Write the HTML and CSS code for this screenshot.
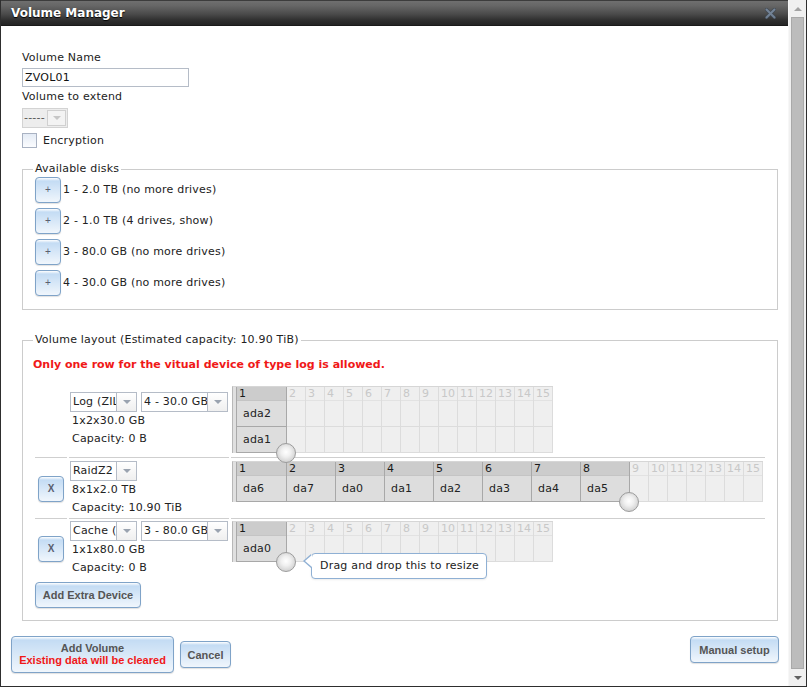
FILE: index.html
```html
<!DOCTYPE html>
<html>
<head>
<meta charset="utf-8">
<title>Volume Manager</title>
<link rel="stylesheet" href="styles.css">
</head>
<body>
<div class="frame">
  <div class="dialog">
    <div class="titlebar">
      <span class="title">Volume Manager</span>
      <svg class="close" width="11" height="11" viewBox="0 0 11 11">
        <path d="M1.5 1.5 L9.5 9.5 M9.5 1.5 L1.5 9.5" stroke="#3e4854" stroke-width="3.4" stroke-linecap="round"/>
        <path d="M1.5 1.5 L9.5 9.5 M9.5 1.5 L1.5 9.5" stroke="#7d90a8" stroke-width="2" stroke-linecap="round"/>
      </svg>
    </div>
    <div class="content">
      <div class="label">Volume Name</div>
      <div class="textbox">ZVOL01</div>
      <div class="label label-gap">Volume to extend</div>
      <div class="select disabled w46"><span class="sel-text">-----</span><span class="sel-arrow"><i class="tri"></i></span></div>
      <div class="check"><span class="box"></span><span>Encryption</span></div>

      <fieldset class="fs disks">
        <legend>Available disks</legend>
        <div class="disk"><span class="btn sq">+</span><span>1 - 2.0 TB (no more drives)</span></div>
        <div class="disk"><span class="btn sq">+</span><span>2 - 1.0 TB (4 drives, show)</span></div>
        <div class="disk"><span class="btn sq">+</span><span>3 - 80.0 GB (no more drives)</span></div>
        <div class="disk"><span class="btn sq">+</span><span>4 - 30.0 GB (no more drives)</span></div>
      </fieldset>

      <fieldset class="fs layout">
        <legend>Volume layout (Estimated capacity: 10.90 TiB)</legend>
        <div class="error">Only one row for the vitual device of type log is allowed.</div>
        <div class="vrows">
          <div class="vrow r1">
            <div class="ca"></div>
            <div class="cb">
              <div class="sels">
                <div class="select w67"><span class="sel-text">Log (ZIL)</span><span class="sel-arrow"><i class="tri"></i></span></div>
                <div class="select w87"><span class="sel-text">4 - 30.0 GB</span><span class="sel-arrow"><i class="tri"></i></span></div>
              </div>
              <div class="info">1x2x30.0 GB</div>
              <div class="info">Capacity: 0 B</div>
            </div>
            <div class="cc">
              <div class="vgrid">
                <div class="strip"></div>
                <div class="col sel first"><div class="hd">1</div><div class="cell">ada2</div><div class="cell">ada1</div><span class="knob"></span></div>
                <div class="col"><div class="hd">2</div><div class="cell"></div><div class="cell"></div></div>
                <div class="col"><div class="hd">3</div><div class="cell"></div><div class="cell"></div></div>
                <div class="col"><div class="hd">4</div><div class="cell"></div><div class="cell"></div></div>
                <div class="col"><div class="hd">5</div><div class="cell"></div><div class="cell"></div></div>
                <div class="col"><div class="hd">6</div><div class="cell"></div><div class="cell"></div></div>
                <div class="col"><div class="hd">7</div><div class="cell"></div><div class="cell"></div></div>
                <div class="col"><div class="hd">8</div><div class="cell"></div><div class="cell"></div></div>
                <div class="col"><div class="hd">9</div><div class="cell"></div><div class="cell"></div></div>
                <div class="col"><div class="hd">10</div><div class="cell"></div><div class="cell"></div></div>
                <div class="col"><div class="hd">11</div><div class="cell"></div><div class="cell"></div></div>
                <div class="col"><div class="hd">12</div><div class="cell"></div><div class="cell"></div></div>
                <div class="col"><div class="hd">13</div><div class="cell"></div><div class="cell"></div></div>
                <div class="col"><div class="hd">14</div><div class="cell"></div><div class="cell"></div></div>
                <div class="col"><div class="hd">15</div><div class="cell"></div><div class="cell"></div></div>
              </div>
            </div>
          </div>

          <div class="vrow r2">
            <div class="ca"><span class="btn xbtn">X</span></div>
            <div class="cb">
              <div class="sels">
                <div class="select w67"><span class="sel-text">RaidZ2</span><span class="sel-arrow"><i class="tri"></i></span></div>
              </div>
              <div class="info">8x1x2.0 TB</div>
              <div class="info">Capacity: 10.90 TiB</div>
            </div>
            <div class="cc">
              <div class="vgrid">
                <div class="strip"></div>
                <div class="col sel first"><div class="hd">1</div><div class="cell">da6</div></div>
                <div class="col sel"><div class="hd">2</div><div class="cell">da7</div></div>
                <div class="col sel"><div class="hd">3</div><div class="cell">da0</div></div>
                <div class="col sel"><div class="hd">4</div><div class="cell">da1</div></div>
                <div class="col sel"><div class="hd">5</div><div class="cell">da2</div></div>
                <div class="col sel"><div class="hd">6</div><div class="cell">da3</div></div>
                <div class="col sel"><div class="hd">7</div><div class="cell">da4</div></div>
                <div class="col sel"><div class="hd">8</div><div class="cell">da5</div><span class="knob"></span></div>
                <div class="col"><div class="hd">9</div><div class="cell"></div></div>
                <div class="col"><div class="hd">10</div><div class="cell"></div></div>
                <div class="col"><div class="hd">11</div><div class="cell"></div></div>
                <div class="col"><div class="hd">12</div><div class="cell"></div></div>
                <div class="col"><div class="hd">13</div><div class="cell"></div></div>
                <div class="col"><div class="hd">14</div><div class="cell"></div></div>
                <div class="col"><div class="hd">15</div><div class="cell"></div></div>
              </div>
            </div>
          </div>

          <div class="vrow r3">
            <div class="ca"><span class="btn xbtn">X</span></div>
            <div class="cb">
              <div class="sels">
                <div class="select w67"><span class="sel-text">Cache (L2ARC)</span><span class="sel-arrow"><i class="tri"></i></span></div>
                <div class="select w87"><span class="sel-text">3 - 80.0 GB</span><span class="sel-arrow"><i class="tri"></i></span></div>
              </div>
              <div class="info">1x1x80.0 GB</div>
              <div class="info">Capacity: 0 B</div>
            </div>
            <div class="cc">
              <div class="vgrid">
                <div class="strip"></div>
                <div class="col sel first"><div class="hd">1</div><div class="cell">ada0</div><span class="knob"></span></div>
                <div class="col"><div class="hd">2</div><div class="cell"></div></div>
                <div class="col"><div class="hd">3</div><div class="cell"></div></div>
                <div class="col"><div class="hd">4</div><div class="cell"></div></div>
                <div class="col"><div class="hd">5</div><div class="cell"></div></div>
                <div class="col"><div class="hd">6</div><div class="cell"></div></div>
                <div class="col"><div class="hd">7</div><div class="cell"></div></div>
                <div class="col"><div class="hd">8</div><div class="cell"></div></div>
                <div class="col"><div class="hd">9</div><div class="cell"></div></div>
                <div class="col"><div class="hd">10</div><div class="cell"></div></div>
                <div class="col"><div class="hd">11</div><div class="cell"></div></div>
                <div class="col"><div class="hd">12</div><div class="cell"></div></div>
                <div class="col"><div class="hd">13</div><div class="cell"></div></div>
                <div class="col"><div class="hd">14</div><div class="cell"></div></div>
                <div class="col"><div class="hd">15</div><div class="cell"></div></div>
              </div>
              <div class="tooltip">Drag and drop this to resize</div>
            </div>
          </div>
        </div>
        <div class="btn extra">Add Extra Device</div>
      </fieldset>
    </div>
    <div class="footer">
      <div class="footer-left">
        <div class="btn addvol"><span>Add Volume</span><span class="warn">Existing data will be cleared</span></div>
        <div class="btn cancel">Cancel</div>
      </div>
      <div class="btn manual">Manual setup</div>
    </div>
  </div>
  <div class="scrollbar">
    <div class="sb-arrow up"></div>
    <div class="sb-thumb"></div>
    <div class="sb-arrow down"></div>
  </div>
</div>
</body>
</html>
```

FILE: styles.css
```css
html, body {
  margin: 0;
  padding: 0;
  background: #ffffff;
}

body {
  font-family: "DejaVu Sans", Verdana, sans-serif;
  font-size: 11px;
  line-height: 14px;
  letter-spacing: 0.2px;
  color: #222222;
}

.frame {
  width: 807px;
  height: 687px;
  box-sizing: border-box;
  border-left: 1px solid #2e2e2e;
  border-right: 1px solid #2e2e2e;
  border-bottom: 1px solid #2e2e2e;
  display: flex;
  overflow: hidden;
}

.dialog {
  width: 787px;
  display: flex;
  flex-direction: column;
  background: #ffffff;
}

/* Title bar */
.titlebar {
  height: 26px;
  box-sizing: border-box;
  border-top: 1px solid #3c3c3c;
  border-bottom: 1px solid #1a1a1a;
  background: linear-gradient(#6f6f6f 0%, #666666 20%, #4a4a4a 55%, #2f2f2f 80%, #242424 100%);
  display: flex;
  align-items: center;
  padding-left: 10px;
  padding-right: 12px;
}

.title {
  font-weight: bold;
  font-size: 12px;
  letter-spacing: 0;
  color: #ffffff;
  text-shadow: 0 1px 1px #000000;
  line-height: 24px;
}

.close {
  margin-left: auto;
  opacity: 0.8;
}

/* Form area */
.content {
  padding: 25px 10px 0 21px;
}

.label {
  height: 14px;
}

.label-gap {
  margin-top: 3px;
}

.textbox {
  margin-top: 3px;
  width: 167px;
  height: 19px;
  box-sizing: border-box;
  border: 1px solid #b5bcc7;
  padding-left: 2px;
  line-height: 17px;
  color: #111111;
}

.select {
  display: flex;
  height: 20px;
  box-sizing: border-box;
  border: 1px solid #b5bcc7;
  background: #ffffff;
}

.select.w46 { width: 46px; }
.select.w67 { width: 67px; }
.select.w87 { width: 87px; }

.sel-text {
  flex: 1;
  min-width: 0;
  overflow: hidden;
  white-space: nowrap;
  text-overflow: clip;
  padding-left: 2px;
  line-height: 18px;
  color: #222222;
}

.sel-arrow {
  width: 19px;
  flex: none;
  border-left: 1px solid #b5bcc7;
  background: linear-gradient(#ffffff, #efefef);
  display: flex;
  align-items: center;
  justify-content: center;
}

.tri {
  width: 0;
  height: 0;
  border-left: 4px solid transparent;
  border-right: 4px solid transparent;
  border-top: 4px solid #9aa3b0;
}

.select.disabled {
  margin-top: 4px;
  border-color: #d3d3d3;
  background: #ededed;
}

.select.disabled .sel-text {
  color: #555555;
  padding-left: 1px;
}

.select.disabled .sel-arrow {
  margin: 1px;
  border: 1px solid #d0d0d0;
  width: 17px;
  background: #f3f3f3;
}

.select.disabled .tri {
  border-top-color: #c6c6c6;
}

.check {
  margin-top: 5px;
  display: flex;
  align-items: center;
  gap: 6px;
  height: 15px;
}

.box {
  width: 15px;
  height: 15px;
  box-sizing: border-box;
  border: 1px solid #a9b2c2;
  background: linear-gradient(#e4ebf5, #fbfcfe);
}

/* Fieldsets */
.fs {
  margin: 0;
  padding: 0 12px 13px 12px;
  border: 1px solid #cccccc;
  min-width: 0;
}

.fs legend {
  padding: 0 2px;
  margin-left: -2px;
  line-height: 14px;
}

.disks {
  margin-top: 14px;
}

.disk {
  display: flex;
  align-items: center;
  gap: 2px;
  height: 26px;
  margin-top: 5px;
}

.disk:first-of-type {
  margin-top: 1px;
}

.layout {
  margin-top: 23px;
  padding-bottom: 12px;
}

.error {
  margin-top: 11px;
  margin-left: -2px;
  font-weight: bold;
  letter-spacing: 0;
  color: #f01818;
}

/* Buttons */
.btn {
  display: flex;
  align-items: center;
  justify-content: center;
  box-sizing: border-box;
  border: 1px solid #7fa3c8;
  border-radius: 4px;
  background-color: #c4dcf4;
  background-image: linear-gradient(#ffffff 0px, rgba(255, 255, 255, 0) 3px, rgba(255, 255, 255, 0.75) 100%);
  box-shadow: 0 1px 1px rgba(0, 0, 0, 0.12);
  font-family: "Liberation Sans", Arial, sans-serif;
  font-weight: bold;
  font-size: 11px;
  letter-spacing: 0;
  color: #555555;
}

.btn.sq {
  width: 26px;
  height: 26px;
  flex: none;
  font-weight: normal;
  font-size: 10px;
  color: #5a6070;
}

.btn.xbtn {
  width: 26px;
  height: 26px;
  font-size: 10px;
  color: #5a6070;
}

.btn.extra {
  margin-top: 3px;
  width: 106px;
  height: 26px;
}

/* Volume layout rows */
.vrows {
  margin-top: 12px;
  display: flex;
  flex-direction: column;
}

.vrow {
  display: flex;
  gap: 2px;
}

.vrow + .vrow {
  margin-top: 1px;
}

.ca, .cb, .cc {
  border-bottom: 1px solid #cfcfcf;
  padding-top: 2px;
  padding-bottom: 1px;
}

.r3 .ca, .r3 .cb, .r3 .cc {
  border-bottom-color: transparent;
  padding-top: 1px;
}

.ca {
  width: 32px;
  flex: none;
  display: flex;
  align-items: center;
  justify-content: center;
}

.cb {
  width: 158px;
  flex: none;
  padding-left: 2px;
  display: flex;
  flex-direction: column;
  justify-content: center;
}

.r1 .cb {
  padding-bottom: 4px;
}

.sels {
  display: flex;
  gap: 4px;
  margin-left: -1px;
}

.info {
  line-height: 18px;
  height: 18px;
  padding-left: 1px;
}

.cc {
  flex: 1;
  min-width: 0;
  position: relative;
}

.r1 .cc {
  padding-bottom: 4px;
}

.vgrid {
  display: flex;
  align-self: flex-start;
  width: max-content;
  border-top: 1px solid #d6d6d6;
  border-left: 1px solid #b8b8b8;
  margin-left: 1px;
}

.strip {
  width: 3px;
  background: #e0e0e0;
  border-right: 1px solid #a9a9a9;
}

.col {
  width: 18px;
  display: flex;
  flex-direction: column;
  border-right: 1px solid #dcdcdc;
  background: #efefef;
  position: relative;
}

.col.sel {
  width: 48px;
  background: #dddddd;
  border-right-color: #a8a8a8;
}

.col.sel.first {
  width: 49px;
}

.hd {
  height: 13px;
  line-height: 13px;
  border-bottom: 1px solid #e2e2e2;
  padding-left: 2px;
  color: #c8c8c8;
  letter-spacing: 0;
  white-space: nowrap;
  overflow: hidden;
}

.col.sel .hd {
  background: #cccccc;
  color: #1a1a1a;
  border-bottom-color: #c4c4c4;
}

.cell {
  height: 25px;
  line-height: 25px;
  border-bottom: 1px solid #dcdcdc;
  padding-left: 6px;
  white-space: nowrap;
}

.col.sel .cell {
  border-bottom-color: #a8a8a8;
}

.knob {
  position: absolute;
  right: -10px;
  bottom: -10px;
  width: 18px;
  height: 18px;
  border: 1px solid #9c9c9c;
  border-radius: 50%;
  background: radial-gradient(circle at 50% 45%, #ffffff 0%, #f0f0f0 35%, #d2d2d2 75%, #bdbdbd 100%);
  z-index: 2;
}

.tooltip {
  position: absolute;
  left: 80px;
  top: 33px;
  width: 176px;
  height: 26px;
  box-sizing: border-box;
  border: 1px solid #8fb0d4;
  border-radius: 4px;
  background: #ffffff;
  padding-left: 8px;
  line-height: 24px;
  white-space: nowrap;
  box-shadow: 0 1px 2px rgba(0, 0, 0, 0.08);
  z-index: 3;
}

.tooltip::before {
  content: "";
  position: absolute;
  left: -9px;
  top: 0px;
  border-top: 7px solid transparent;
  border-bottom: 7px solid transparent;
  border-right: 8px solid #8fb0d4;
}

.tooltip::after {
  content: "";
  position: absolute;
  left: -7px;
  top: 1px;
  border-top: 6px solid transparent;
  border-bottom: 6px solid transparent;
  border-right: 7px solid #ffffff;
}

/* Footer */
.footer {
  display: flex;
  justify-content: space-between;
  align-items: flex-start;
  padding: 15px 9px 0 10px;
}

.footer-left {
  display: flex;
  align-items: center;
  gap: 6px;
}

.btn.addvol {
  width: 163px;
  height: 37px;
  flex-direction: column;
  line-height: 12px;
  padding-bottom: 1px;
}

.warn {
  color: #f01818;
}

.btn.cancel {
  width: 51px;
  height: 27px;
}

.btn.manual {
  width: 89px;
  height: 27px;
}

/* Scrollbar */
.scrollbar {
  width: 18px;
  flex: none;
  background: #f0f0f0;
  border-left: 1px solid #f7f7f7;
  box-sizing: border-box;
  display: flex;
  flex-direction: column;
  align-items: center;
}

.sb-arrow {
  height: 17px;
  width: 100%;
  display: flex;
  align-items: center;
  justify-content: center;
}

.sb-arrow::after {
  content: "";
  width: 0;
  height: 0;
  border-left: 4px solid transparent;
  border-right: 4px solid transparent;
}

.sb-arrow.up::after {
  border-bottom: 4px solid #a3a3a3;
}

.sb-arrow.down::after {
  border-top: 4px solid #606060;
}

.sb-thumb {
  flex: 1;
  width: 13px;
  box-sizing: border-box;
  border: 1px solid #a9a9a9;
  background: #bcbcbc;
}
```
